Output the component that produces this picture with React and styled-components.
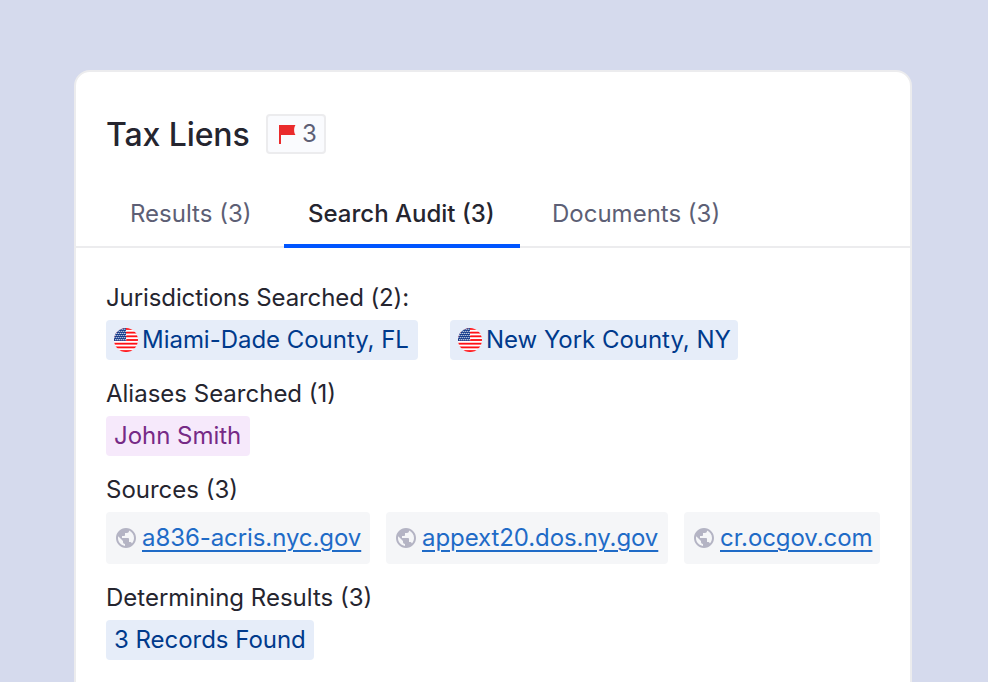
import React from 'react';
import styled, { createGlobalStyle } from 'styled-components'
import { MdPublic } from 'react-icons/md'

const GlobalStyle = createGlobalStyle`
  * { box-sizing: border-box; }
  body {
    margin: 0;
    background: #d5daed;
    font-family: Inter, sans-serif;
    color: #25252f;
  }
`

const Page = styled.div`
  height: 682px;
  overflow: hidden;
  padding: 70px 76px 0 74px;
`

const Card = styled.section`
  height: 700px;
  background: #fff;
  border: 2px solid #ececee;
  border-radius: 16px;
`

const Header = styled.header`
  display: flex;
  align-items: center;
  padding: 42px 30px 0;
`

const Title = styled.h1`
  width: 160px;
  margin: 0;
  padding-top: 2px;
  font-size: 32px;
  line-height: 38px;
  font-weight: 500;
  letter-spacing: -0.1px;
`

const FlagCount = styled.div`
  display: flex;
  align-items: center;
  gap: 6px;
  width: 60px;
  height: 40px;
  padding-left: 11px;
  border: 2px solid #ececee;
  border-radius: 4px;
  background: #fafbfe;
  color: #5d5f75;
  font-size: 24px;
  line-height: 36px;
`

const Tabs = styled.nav`
  display: flex;
  height: 64px;
  margin-top: 30px;
  padding-left: 30px;
  border-bottom: 2px solid #ececee;
`

const Tab = styled.div`
  width: ${props => props.$width}px;
  height: 64px;
  padding: 14px 0 0 ${props => props.$inset || 24}px;
  font-size: 24px;
  line-height: 32px;
  white-space: nowrap;
  font-weight: ${props => props.$active ? 500 : 400};
  color: ${props => props.$active ? '#25252f' : '#5d5f75'};
  border-bottom: 4px solid ${props => props.$active ? '#0055ff' : 'transparent'};
`

const Content = styled.div`
  padding: 32px 30px 0;
`

const Group = styled.div`
  margin-bottom: 16px;
`

const Label = styled.div`
  font-size: 24px;
  line-height: 36px;
  height: 40px;
  letter-spacing: ${props => props.$tight ? '-0.1px' : 'normal'};
`

const Row = styled.div`
  display: flex;
  gap: ${props => props.$gap || 0}px;
`

const tones = {
  blue: ['#e6edf9', '#003a8c'],
  purple: ['#f6e9fb', '#762a86'],
}

const Tag = styled.div`
  display: flex;
  align-items: center;
  gap: 4px;
  width: ${props => props.$width}px;
  height: 40px;
  padding: 0 8px;
  border-radius: 4px;
  font-size: 24px;
  line-height: 40px;
  white-space: nowrap;
  background: ${props => tones[props.$tone][0]};
  color: ${props => tones[props.$tone][1]};
`

const TagText = styled.span`
  height: 40px;
  letter-spacing: -0.03px;
`

const Source = styled.div`
  display: flex;
  align-items: center;
  gap: 4px;
  width: ${props => props.$width}px;
  height: 52px;
  padding: 0 8px;
  border-radius: 4px;
  background: #f5f6f8;
`

const GlobeIcon = styled(MdPublic)`
  flex: none;
  width: 24px;
  height: 24px;
  color: #b4b4c4;
`

const Link = styled.a`
  color: #1f6bc7;
  font-size: 24px;
  line-height: 36px;
  letter-spacing: -0.08px;
  white-space: nowrap;
  text-decoration: underline;
  text-decoration-thickness: 2px;
  text-underline-offset: 4px;
`

const FlagSvg = styled.svg`
  flex: none;
  display: block;
`

const RedFlag = () => (
  <FlagSvg width="17" height="20" viewBox="0 0 17 20">
    <path d="M0 1H16.5C14.7 3.5 14.7 8.5 16.5 11H2V20H0Z" fill="#ea2b2c" />
  </FlagSvg>
)

const stripes = [0, 1, 2, 3, 4, 5, 6]
const stars = [0, 1, 2, 3, 4, 5]

const UsFlag = ({ id }) => (
  <FlagSvg width="24" height="24" viewBox="0 0 24 24">
    <clipPath id={id}><circle cx="12" cy="12" r="12" /></clipPath>
    <g clipPath={`url(#${id})`}>
      <rect width="24" height="24" fill="#fff" />
      {stripes.map(n => (
        <rect key={n} y={n * 3.692} width="24" height="1.846" fill="#ff1016" />
      ))}
      <rect width="12" height="12.92" fill="#173c8c" />
      {stars.map(row => stars.map(col => (
        <circle
          key={`${row}-${col}`}
          cx={0.8 + col * 2 + (row % 2)}
          cy={1.2 + row * 2.1}
          r="0.6"
          fill="#fff"
        />
      )))}
    </g>
  </FlagSvg>
)

const App = () => (
  <Page>
    <GlobalStyle />
    <Card>
      <Header>
        <Title>Tax Liens</Title>
        <FlagCount><RedFlag />3</FlagCount>
      </Header>
      <Tabs>
        <Tab $width={178}>Results (3)</Tab>
        <Tab $width={236} $active>Search Audit (3)</Tab>
        <Tab $width={232} $inset={32}>Documents (3)</Tab>
      </Tabs>
      <Content>
        <Group>
          <Label $tight>Jurisdictions Searched (2):</Label>
          <Row $gap={32}>
            <Tag $tone="blue" $width={312}><UsFlag id="miami" /><TagText>Miami-Dade County, FL</TagText></Tag>
            <Tag $tone="blue" $width={288}><UsFlag id="newyork" /><TagText>New York County, NY</TagText></Tag>
          </Row>
        </Group>
        <Group>
          <Label>Aliases Searched (1)</Label>
          <Row><Tag $tone="purple" $width={144}><TagText>John Smith</TagText></Tag></Row>
        </Group>
        <Group>
          <Label>Sources (3)</Label>
          <Row $gap={16}>
            <Source $width={264}><GlobeIcon /><Link>a836-acris.nyc.gov</Link></Source>
            <Source $width={282}><GlobeIcon /><Link>appext20.dos.ny.gov</Link></Source>
            <Source $width={196}><GlobeIcon /><Link>cr.ocgov.com</Link></Source>
          </Row>
        </Group>
        <Group>
          <Label>Determining Results (3)</Label>
          <Row><Tag $tone="blue" $width={208}><TagText>3 Records Found</TagText></Tag></Row>
        </Group>
      </Content>
    </Card>
  </Page>
)

export default App;
